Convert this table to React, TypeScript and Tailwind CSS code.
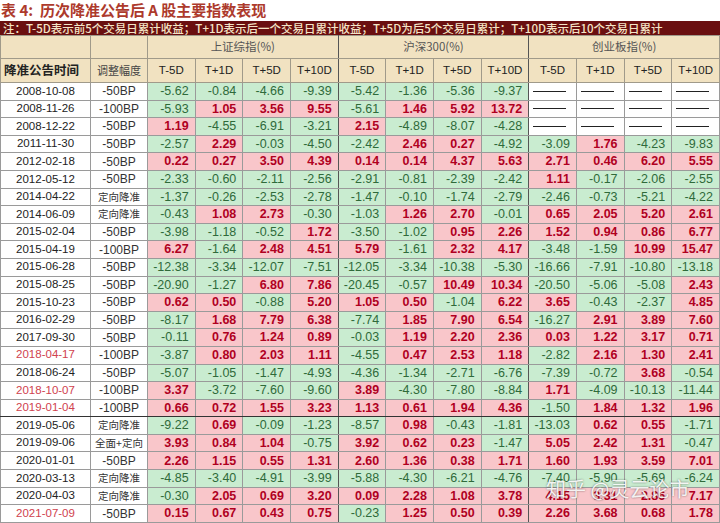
type Row = [string, string, (string | null)[], boolean?];

const rows: Row[] = [
  ['2008-10-08', '-50BP', ['-5.62', '-0.84', '-4.66', '-9.39', '-5.42', '-1.36', '-5.36', '-9.37', null, null, null, null]],
  ['2008-11-26', '-100BP', ['-5.93', '1.05', '3.56', '9.55', '-5.61', '1.46', '5.92', '13.72', null, null, null, null]],
  ['2008-12-22', '-50BP', ['1.19', '-4.55', '-6.91', '-3.21', '2.15', '-4.89', '-8.07', '-4.28', null, null, null, null]],
  ['2011-11-30', '-50BP', ['-2.57', '2.29', '-0.03', '-4.50', '-2.42', '2.46', '0.27', '-4.92', '-3.09', '1.76', '-4.23', '-9.83']],
  ['2012-02-18', '-50BP', ['0.22', '0.27', '3.50', '4.39', '0.14', '0.14', '4.37', '5.63', '2.71', '0.46', '6.20', '5.55']],
  ['2012-05-12', '-50BP', ['-2.33', '-0.60', '-2.11', '-2.56', '-2.91', '-0.81', '-2.39', '-2.42', '1.11', '-0.17', '-2.06', '-2.55']],
  ['2014-04-22', '定向降准', ['-1.37', '-0.26', '-2.53', '-2.78', '-1.47', '-0.10', '-1.74', '-2.79', '-2.46', '-0.73', '-5.21', '-4.22']],
  ['2014-06-09', '定向降准', ['-0.43', '1.08', '2.73', '-0.30', '-1.03', '1.26', '2.70', '-0.01', '0.65', '2.05', '5.20', '2.61']],
  ['2015-02-04', '-50BP', ['-3.98', '-1.18', '-0.52', '1.72', '-3.50', '-1.02', '0.95', '2.26', '1.52', '0.94', '0.86', '6.77']],
  ['2015-04-19', '-100BP', ['6.27', '-1.64', '2.48', '4.51', '5.79', '-1.61', '2.32', '4.17', '-3.48', '-1.59', '10.99', '15.47']],
  ['2015-06-28', '-50BP', ['-12.38', '-3.34', '-12.07', '-7.51', '-12.05', '-3.34', '-10.38', '-5.30', '-16.66', '-7.91', '-10.80', '-13.18']],
  ['2015-08-25', '-50BP', ['-20.90', '-1.27', '6.80', '7.86', '-20.45', '-0.57', '10.49', '10.34', '-20.50', '-5.06', '-5.08', '2.43']],
  ['2015-10-23', '-50BP', ['0.62', '0.50', '-0.88', '5.20', '1.05', '0.50', '-1.04', '6.22', '3.65', '-0.43', '-2.37', '4.85']],
  ['2016-02-29', '-50BP', ['-8.17', '1.68', '7.79', '6.38', '-7.74', '1.85', '7.90', '6.54', '-16.27', '2.91', '3.89', '7.60']],
  ['2017-09-30', '-50BP', ['-0.11', '0.76', '1.24', '0.89', '-0.03', '1.19', '2.20', '2.36', '0.03', '1.22', '3.17', '0.71']],
  ['2018-04-17', '-100BP', ['-3.87', '0.80', '2.03', '1.11', '-4.55', '0.47', '2.53', '1.18', '-2.82', '2.16', '1.30', '2.41'], true],
  ['2018-06-24', '-50BP', ['-5.07', '-1.05', '-1.47', '-4.93', '-4.36', '-1.34', '-2.71', '-6.76', '-7.39', '-0.72', '3.68', '-0.54']],
  ['2018-10-07', '-100BP', ['3.37', '-3.72', '-7.60', '-9.60', '3.89', '-4.30', '-7.80', '-8.84', '1.71', '-4.09', '-10.13', '-11.44'], true],
  ['2019-01-04', '-100BP', ['0.66', '0.72', '1.55', '3.23', '1.13', '0.61', '1.94', '4.36', '-1.50', '1.84', '1.32', '1.96'], true],
  ['2019-05-06', '定向降准', ['-9.22', '0.69', '-0.09', '-1.23', '-8.57', '0.98', '-0.43', '-1.81', '-13.03', '0.62', '0.55', '-1.71']],
  ['2019-09-06', '全面+定向', ['3.93', '0.84', '1.04', '-0.75', '3.92', '0.62', '0.23', '-1.47', '5.05', '2.42', '1.31', '-0.47']],
  ['2020-01-01', '-50BP', ['2.26', '1.15', '0.55', '1.31', '2.60', '1.36', '0.38', '1.71', '1.60', '1.93', '3.59', '7.01']],
  ['2020-03-13', '定向降准', ['-4.85', '-3.40', '-4.91', '-3.99', '-5.88', '-4.30', '-6.21', '-4.76', '-7.40', '-5.90', '-5.69', '-6.24']],
  ['2020-04-03', '定向降准', ['-0.30', '2.05', '0.69', '3.20', '0.09', '2.28', '1.08', '3.78', '4.15', '3.31', '2.86', '7.17']],
  ['2021-07-09', '-50BP', ['0.15', '0.67', '0.43', '0.75', '-0.23', '1.25', '0.50', '0.39', '2.26', '3.68', '0.68', '1.78'], true],
];

const periods = ['T-5D', 'T+1D', 'T+5D', 'T+10D'];
const indices = ['上证综指(%)', '沪深300(%)', '创业板指(%)'];

const cjk = "font-['Noto_Sans_CJK_SC',sans-serif]";
const num = "font-['Liberation_Sans',Arial,sans-serif]";

function ValueCell({ v, idx, thick }: { v: string | null; idx: number; thick: boolean }) {
  const groupEdge = idx === 3 || idx === 7 ? 'border-r-[#555]' : '';
  const bottom = thick ? 'border-b-[#333]' : '';
  if (v === null) {
    return (
      <td className={`border border-[#9a9a9a] bg-white pl-[4px] ${groupEdge} ${bottom}`}>
        <div className="h-px w-[33px] bg-[#222]" />
      </td>
    );
  }
  const neg = v.startsWith('-');
  return (
    <td
      className={`border border-[#9a9a9a] pr-[6px] text-right text-[12.5px] leading-none ${num} ${groupEdge} ${bottom} ${
        neg ? 'bg-[#c9ecd0] text-[#2f6a3a]' : 'bg-[#f9c6ca] font-bold text-[#b0001f]'
      }`}
    >
      {v}
    </td>
  );
}

export default function App() {
  return (
    <div className="relative w-[720px] h-[523px] overflow-hidden bg-white">
      <div className={`h-[21px] pl-[1px] text-[15px] font-bold leading-[20px] text-[#ad3a2c] ${cjk}`}>
        表 4:&nbsp; 历次降准公告后 A 股主要指数表现
      </div>
      <div
        className={`h-[14px] overflow-hidden whitespace-nowrap bg-[#6a0f10] pl-[3px] text-[11.5px] font-medium leading-[14px] text-[#f4e4c6] ${cjk}`}
      >
        注：T-5D表示前5个交易日累计收益；T+1D表示后一个交易日累计收益；T+5D为后5个交易日累计；T+10D表示后10个交易日累计
      </div>
      <table className="w-[720px] table-fixed border-collapse">
        <colgroup>
          <col className="w-[90px]" />
          <col className="w-[57px]" />
          {Array.from({ length: 12 }).map((_, i) => (
            <col key={i} />
          ))}
        </colgroup>
        <thead className="bg-[#f1e2c1]">
          <tr className="h-[23px]">
            <th className="border border-[#a09a8a]" />
            <th className="border border-[#a09a8a]" />
            {indices.map((name, i) => (
              <th
                key={name}
                colSpan={4}
                className={`border border-[#a09a8a] text-center text-[11.5px] font-normal text-[#555] ${cjk} ${
                  i < 2 ? 'border-r-[#555]' : ''
                }`}
              >
                {name}
              </th>
            ))}
          </tr>
          <tr className="h-[24px]">
            <th className={`border border-[#a09a8a] pl-[3px] text-left text-[12.5px] font-bold text-[#222] ${cjk}`}>
              降准公告时间
            </th>
            <th className={`border border-[#a09a8a] text-center text-[11px] font-normal text-[#444] ${cjk}`}>
              调整幅度
            </th>
            {indices.flatMap((name, g) =>
              periods.map((p, j) => (
                <th
                  key={name + p}
                  className={`border border-[#a09a8a] text-center text-[11.5px] font-normal text-[#222] ${num} ${
                    j === 3 && g < 2 ? 'border-r-[#555]' : ''
                  }`}
                >
                  {p}
                </th>
              ))
            )}
          </tr>
        </thead>
        <tbody>
          {rows.map(([date, adj, vals, red]) => {
            const thick = date === '2019-01-04';
            const bottom = thick ? 'border-b-[#333]' : '';
            return (
              <tr key={date} className="h-[17.6px]">
                <td
                  className={`border border-[#9a9a9a] bg-white text-center text-[11.5px] leading-none ${num} ${bottom} ${
                    red ? 'text-[#d0424e]' : 'text-[#222]'
                  }`}
                >
                  {date}
                </td>
                <td
                  className={`border border-[#9a9a9a] bg-white text-center leading-none text-[#333] ${bottom} ${
                    adj.endsWith('BP') ? `text-[12px] ${num}` : `text-[10.5px] ${cjk}`
                  }`}
                >
                  {adj}
                </td>
                {vals.map((v, i) => (
                  <ValueCell key={i} v={v} idx={i} thick={thick} />
                ))}
              </tr>
            );
          })}
        </tbody>
      </table>
      <div
        className={`absolute left-[546px] top-[479px] whitespace-nowrap text-[20px] leading-none text-white/90 [text-shadow:0_0_2px_rgba(0,0,0,0.55)] ${cjk}`}
      >
        知乎 @灵云论市
      </div>
    </div>
  );
}
